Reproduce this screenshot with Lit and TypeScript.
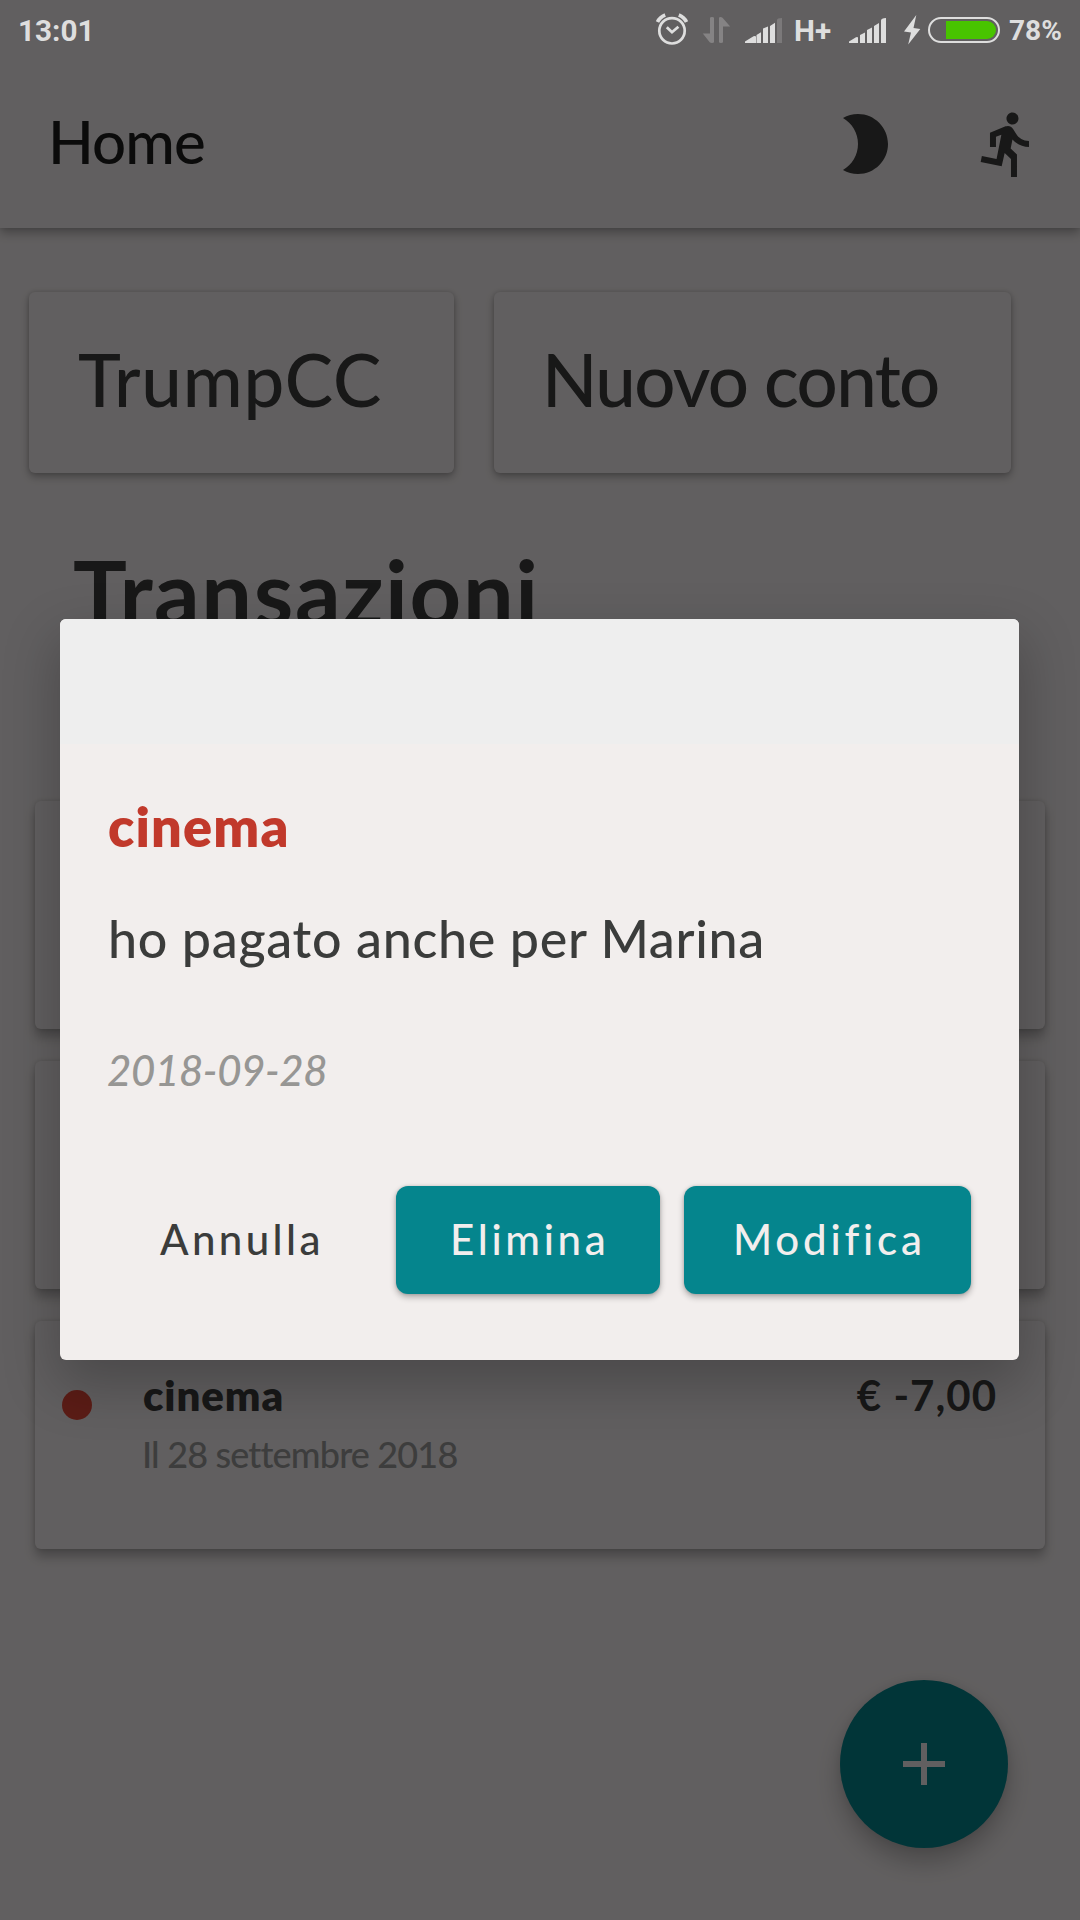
import { LitElement, html, css } from "lit";
import { customElement } from "lit/decorators.js";

@customElement("status-bar")
class StatusBar extends LitElement {
  static styles = css`
    :host { display: flex; height: 60px; padding-left: 18px; padding-right: 19px; align-items: stretch;
      font: 700 29.7px/62px Roboto, sans-serif; color: #dedede; white-space: nowrap; }
    svg { display: block; flex: none; height: 60px; overflow: visible; }
    .grow { flex: 1; }
    .alarm { width: 32px; margin-right: 15px; }
    .arrows { width: 27px; margin-right: 15px; }
    .signal { width: 38px; }
    .net { width: 37px; margin-left: 11px; margin-right: 18px; }
    .bolt { width: 17px; margin-left: 17px; margin-right: 7px; }
    .battery { width: 72px; margin-right: 9px; }
    .percent { font-size: 28px; line-height: 61px; width: 52px; }
  `;
  render() {
    return html`
      <span>13:01</span><span class="grow"></span>
      <svg class="alarm" viewBox="656 0 32 60" fill="none" stroke="#dedede">
        <circle cx="672" cy="30.8" r="12.7" stroke-width="2.7"></circle>
        <path d="M666.8 27.2l5.2 5 6.4-5.4" stroke-width="2.8"></path>
        <path d="M657.5 22c1.5-3.2 4.200-5.600 7.700-7" stroke-width="3.600"></path>
        <path d="M686.500 22c-1.500-3.200-4.200-5.600-7.700-7" stroke-width="3.600"></path>
      </svg>
      <svg class="arrows" viewBox="703 0 27 60" fill="#858384">
        <path d="M710 18q0-1 2-1t2 1v24q0 1-2 1-1.500 0-2.300-.8L702.800 33.500h7.200z"></path>
        <path d="M719 18q0-1 1.500-1 1 0 2 .8L730.200 26.500H723V42q0 1-2 1t-2-1z"></path>
      </svg>
      <svg class="signal" viewBox="745 0 38 60" fill="#dedede">
        <path d="M745 43v-1.500l8.500-5.200q2.500-1 2.500.8V43zM756.500 43v-8l4.500-2.700V43zM763 43V28.500l5-2V43zM770 43V26l5-3.200V43z"></path>
        <path d="M777 43V20q0-2 5-2v25z" fill="#7b797a"></path>
      </svg>
      <span class="net">H+</span>
      <svg class="signal" viewBox="849 0 38 60" fill="#dedede">
        <path d="M849 43v-1.500l7-4.200q2-1 2 .7V43zM860 43v-8l5-2.500V43zM867 43V30l5-2.500V43zM874 43V26l5-3v20zM881 43V20.500q0-2.500 5-2.500v25z"></path>
      </svg>
      <svg class="bolt" viewBox="904 0 17 60" fill="#dedede"><path d="M916.300 15L904 31.600l7 1-2.800 12L920.300 29l-6.800-1z"></path></svg>
      <svg class="battery" viewBox="928 0 72 60">
        <rect x="929" y="18" width="70" height="24" rx="12" fill="none" stroke="#dedede" stroke-width="2"></rect>
        <path d="M946 21h41a9 9 0 0 1 0 18h-41z" fill="#48c400"></path>
      </svg>
      <span class="percent">78%</span>`;
  }
}

@customElement("home-screen")
class HomeScreen extends LitElement {
  static styles = css`
    :host { display: flex; flex-direction: column; flex: 1; color: #3c3c3c; }
    .header { box-sizing: border-box; height: 228px; padding: 60px 36px 0 48px; display: flex; align-items: center;
      box-shadow: 0 5px 10px rgba(0,0,0,.29), 0 0 5px rgba(0,0,0,.1); background: #f3eeef; }
    .title { flex: 1; padding-bottom: 6px; font-size: 60px; letter-spacing: -.9px; color: #1c1c1c; }
    .icons { display: flex; gap: 72px; }
    .icons svg { width: 72px; height: 72px; fill: #3c3c3c; display: block; }
    .accounts { display: flex; gap: 40px; margin: 64px 0 0 29px; }
    .card { box-sizing: border-box; border-radius: 6px; background: #f3eeef;
      box-shadow: 0 4px 9px rgba(0,0,0,.28), 0 0 5px rgba(0,0,0,.14); }
    .account { height: 181px; padding: 43px 0 0 49px; font-size: 72.5px; width: 425px; letter-spacing: .8px; }
    .account.new { width: 517px; padding-left: 48px; letter-spacing: -1.6px; }
    .section { margin: 64px 0 156px 73px; font-size: 90px; line-height: 108px; font-weight: 700; letter-spacing: 1.6px; }
    .list { display: flex; flex-direction: column; gap: 32px; padding: 0 35px; }
    .row { height: 228px; padding: 49px 48px 0 27px; display: flex; align-items: flex-start;
      box-shadow: 0 8px 11px rgba(0,0,0,.25), 0 0 5px rgba(0,0,0,.14); }
    .dot { width: 30px; height: 30px; border-radius: 50%; background: #e34838; margin: 20px 51px 0 0; flex: none; }
    .info { flex: 1; display: flex; flex-direction: column; gap: 13px; }
    .name { font-weight: 800; font-size: 42px; letter-spacing: .9px; }
    .date { font-size: 36px; letter-spacing: -.84px; color: #999; margin-left: -1px; }
    .amount { font-weight: 700; font-size: 42px; letter-spacing: 1px; }
    .fab { position: absolute; left: 840px; top: 1680px; width: 168px; height: 168px; border-radius: 50%; background: #03858d;
      display: grid; place-items: center; box-shadow: 0 14px 24px rgba(0,0,0,.24), 0 0 10px rgba(0,0,0,.08); }
    .fab svg { width: 42px; height: 42px; }
  `;
  render() {
    return html`
      <header class="header">
        <div class="title">Home</div>
        <div class="icons">
          <svg viewBox="0 0 24 24"><path d="M10 2c-1.820 0-3.530.5-5 1.350C7.990 5.080 10 8.300 10 12s-2.010 6.920-5 8.650C6.470 21.500 8.180 22 10 22c5.520 0 10-4.480 10-10S15.520 2 10 2z"></path></svg>
          <svg viewBox="0 0 24 24"><path d="M13.490 5.480c1.100 0 2-.9 2-2s-.9-2-2-2-2 .9-2 2 .9 2 2 2zm-3.600 13.900l1-4.400 2.100 2v6h2v-7.500l-2.100-2 .6-3c1.300 1.500 3.300 2.500 5.500 2.500v-2c-1.900 0-3.500-1-4.300-2.400l-1-1.600c-.4-.6-1-1-1.700-1-.3 0-.5.1-.8.1l-5.200 2.200v4.700h2v-3.400l1.800-.7-1.600 8.100-4.900-1-.4 2 7 1.400z"></path></svg>
        </div>
      </header>
      <div class="accounts">
        <div class="card account">TrumpCC</div>
        <div class="card account new">Nuovo conto</div>
      </div>
      <div class="section">Transazioni</div>
      <div class="list">
        <div class="card row"></div>
        <div class="card row"></div>
        <div class="card row">
          <span class="dot"></span>
          <div class="info"><span class="name">cinema</span><span class="date">Il 28 settembre 2018</span></div>
          <span class="amount">€ -7,00</span>
        </div>
      </div>
      <div class="fab"><svg viewBox="0 0 42 42" fill="#f3eeef"><path d="M18 0h6v18h18v6H24v18h-6V24H0v-6h18z"></path></svg></div>`;
  }
}

@customElement("transaction-dialog")
class TransactionDialog extends LitElement {
  static styles = css`
    :host { display: block; width: 959px; height: 741px; border-radius: 6px; overflow: hidden; background: #f2eeed; color: #3b3c3b; }
    .head { height: 125px; background: #eee; }
    .body { padding: 50px 48px 0; display: flex; flex-direction: column; }
    .name { font-size: 54px; line-height: 65px; font-weight: 800; letter-spacing: 1.2px; color: #c1392b; }
    .note { margin-top: 48px; font-size: 52px; line-height: 63px; letter-spacing: .68px; }
    .date { margin-top: 75px; margin-left: -1px; font-size: 42px; line-height: 50px; font-style: italic; letter-spacing: -.4px; color: #979694; }
    .actions { margin-top: 91px; display: flex; gap: 24px; }
    .btn { box-sizing: border-box; width: 264px; height: 108px; padding-top: 28px; border-radius: 12px; font-size: 42px; line-height: 51px; }
    .cancel { padding-left: 52px; letter-spacing: 3.4px; }
    .fill { background: #05858d; color: #f2eeed; box-shadow: 0 3px 6px rgba(0,0,0,.3), 0 0 3px rgba(0,0,0,.14); }
    .delete { padding-left: 54px; letter-spacing: 3.65px; }
    .edit { width: 287px; padding-left: 49px; letter-spacing: 3.8px; }
  `;
  render() {
    return html`
      <div class="head"></div>
      <div class="body">
        <div class="name">cinema</div>
        <div class="note">ho pagato anche per Marina</div>
        <div class="date">2018-09-28</div>
        <div class="actions">
          <div class="btn cancel">Annulla</div>
          <div class="btn fill delete">Elimina</div>
          <div class="btn fill edit">Modifica</div>
        </div>
      </div>`;
  }
}

@customElement("app-root")
class AppRoot extends LitElement {
  static styles = css`
    :host { display: flex; position: relative; width: 1080px; height: 1920px; overflow: hidden; background: #f3eeef;
      font-family: Lato, sans-serif; font-weight: 500; line-height: 1.2; white-space: nowrap; }
    .scrim { position: absolute; inset: 0; background: rgba(0,0,0,.6); }
    .status { position: absolute; left: 0; top: 0; right: 0; }
    .dialog { position: absolute; left: 60px; top: 619px; box-shadow: 0 22px 54px 4px rgba(0,0,0,.23); }
  `;
  render() {
    return html`<home-screen></home-screen><div class="scrim"></div>
      <status-bar class="status"></status-bar><transaction-dialog class="dialog"></transaction-dialog>`;
  }
}
